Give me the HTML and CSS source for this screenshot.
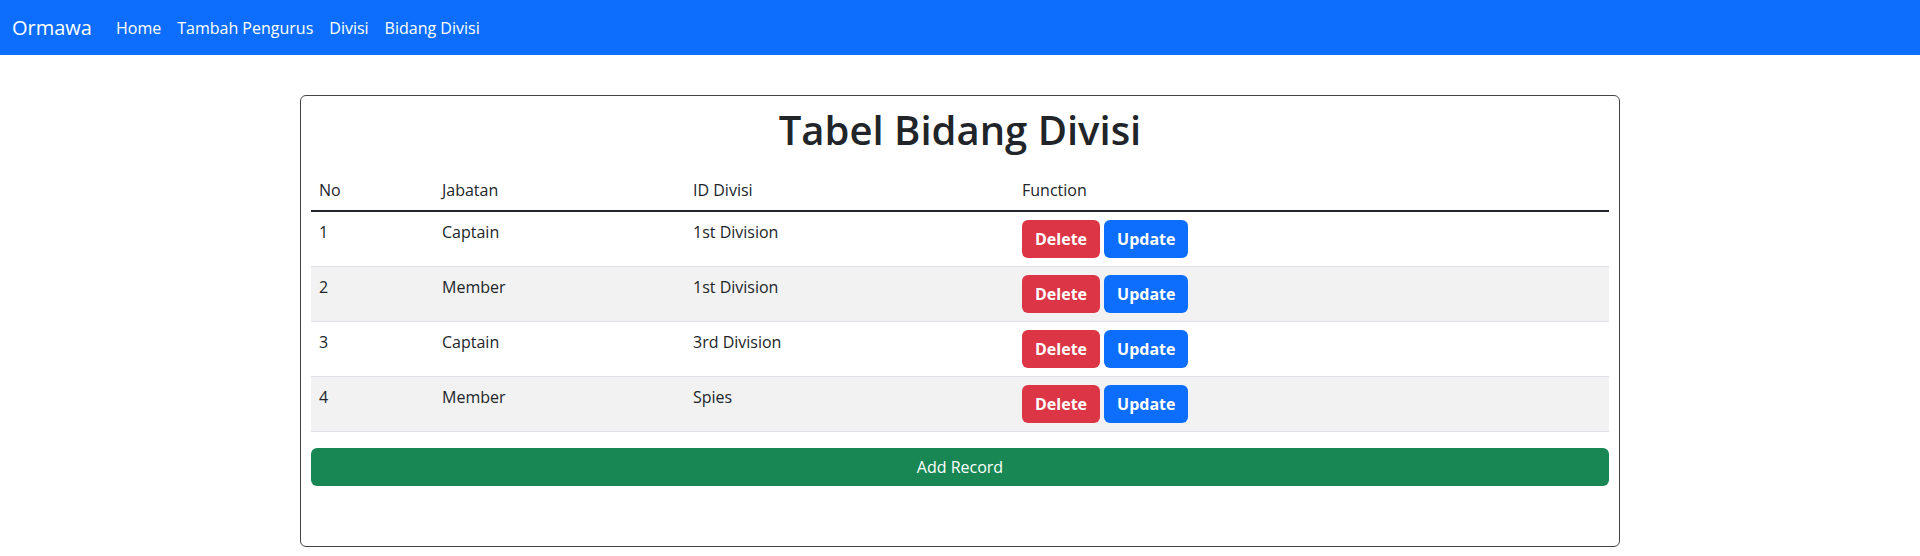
FILE: index.html
```html
<!DOCTYPE html>
<html lang="id">
<head>
<meta charset="utf-8">
<title>Ormawa - Tabel Bidang Divisi</title>
<link rel="stylesheet" href="styles.css">
</head>
<body>
<nav class="navbar">
  <a class="brand" href="#">Ormawa</a>
  <ul class="nav-links">
    <li><a href="#">Home</a></li>
    <li><a href="#">Tambah Pengurus</a></li>
    <li><a href="#">Divisi</a></li>
    <li><a href="#">Bidang Divisi</a></li>
  </ul>
</nav>
<main class="container">
  <section class="card">
    <h1 class="title">Tabel Bidang Divisi</h1>
    <table class="table">
      <colgroup>
        <col class="c-no">
        <col class="c-jab">
        <col class="c-div">
        <col class="c-fn">
      </colgroup>
      <thead>
        <tr><th>No</th><th>Jabatan</th><th>ID Divisi</th><th>Function</th></tr>
      </thead>
      <tbody>
        <tr><td>1</td><td>Captain</td><td>1st Division</td><td><div class="actions"><button class="btn btn-danger">Delete</button><button class="btn btn-primary">Update</button></div></td></tr>
        <tr><td>2</td><td>Member</td><td>1st Division</td><td><div class="actions"><button class="btn btn-danger">Delete</button><button class="btn btn-primary">Update</button></div></td></tr>
        <tr><td>3</td><td>Captain</td><td>3rd Division</td><td><div class="actions"><button class="btn btn-danger">Delete</button><button class="btn btn-primary">Update</button></div></td></tr>
        <tr><td>4</td><td>Member</td><td>Spies</td><td><div class="actions"><button class="btn btn-danger">Delete</button><button class="btn btn-primary">Update</button></div></td></tr>
      </tbody>
    </table>
    <button class="btn btn-success btn-block">Add Record</button>
  </section>
</main>
</body>
</html>
```

FILE: styles.css
```css
* { box-sizing: border-box; }
html, body { margin: 0; padding: 0; }
body {
  font-family: "Open Sans", "Noto Sans", sans-serif;
  font-size: 16px;
  line-height: 1.5;
  color: #212529;
  background: #fff;
}
.navbar {
  display: flex;
  align-items: center;
  height: 55px;
  padding: 0 12px;
  background: #0d6efd;
}
.brand {
  color: #fff;
  text-decoration: none;
  font-size: 20px;
  line-height: 30px;
  margin-right: 16px;
}
.nav-links {
  display: flex;
  list-style: none;
  margin: 0;
  padding: 0;
}
.nav-links a {
  display: block;
  padding: 8px 8px;
  color: #fff;
  text-decoration: none;
  font-size: 16px;
}
.container {
  width: 1320px;
  margin: 40px auto 0;
}
.card {
  border: 1px solid #444;
  border-radius: 6px;
  padding: 10px 10px 60px;
}
.title {
  margin: 0 0 16px;
  text-align: center;
  font-size: 40px;
  font-weight: 600;
  line-height: 1.2;
}
.table {
  width: 100%;
  border-collapse: collapse;
  table-layout: fixed;
  margin-bottom: 16px;
}
.c-no { width: 123px; }
.c-jab { width: 251px; }
.c-div { width: 329px; }
.table th, .table td {
  text-align: left;
  vertical-align: top;
  padding: 8px;
  font-weight: 400;
}
.table thead th { border-bottom: 2px solid #212529; }
.table tbody td { border-bottom: 1px solid #dee2e6; }
.table tbody tr:nth-child(odd) td { background: #fff; }
.table tbody tr:nth-child(even) td { background: #f2f2f2; }
.actions { display: flex; gap: 4px; }
.btn {
  font-family: inherit;
  font-size: 16px;
  line-height: 24px;
  padding: 6px 12px;
  border: 1px solid transparent;
  border-radius: 6px;
  color: #fff;
  cursor: pointer;
}
.btn-danger { background: #dc3545; font-weight: 700; }
.btn-primary { background: #0d6efd; font-weight: 700; }
.btn-success { background: #198754; font-weight: 400; }
.btn-block { display: block; width: 100%; }
```
